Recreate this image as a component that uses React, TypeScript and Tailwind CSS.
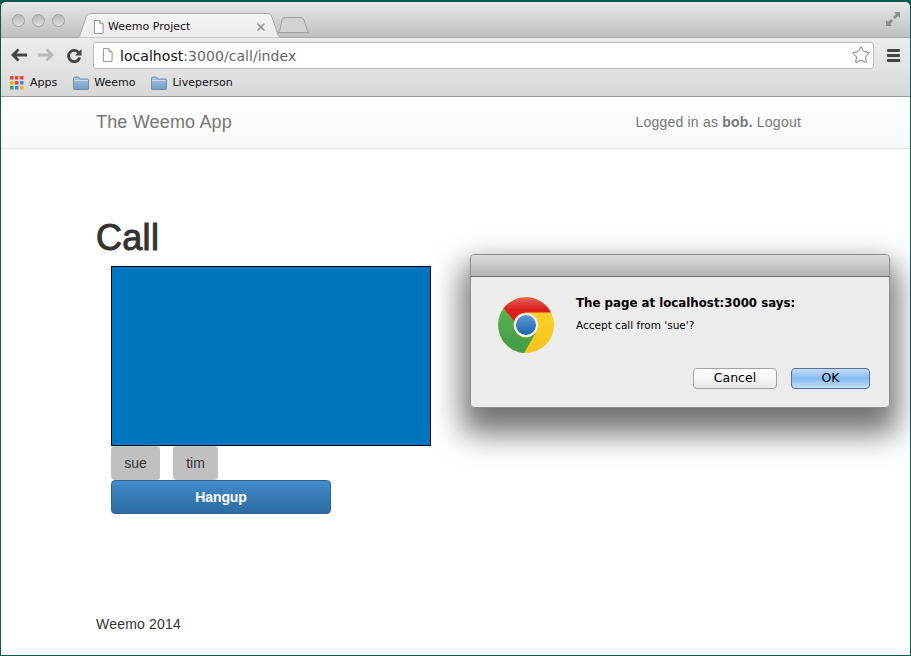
import React from 'react';
import { Star, X } from 'lucide-react';

const PageIcon = ({ className }: { className?: string }) => (
  <svg viewBox="0 0 12 15" className={className} fill="#fff" stroke="#8a8a8a" strokeWidth="1">
    <path d="M1.5.5h6l3.5 3.5v10.5h-9.500z" />
    <path d="M7.500.5v3.500h3.500" fill="#ddd" />
  </svg>
);

const Folder = () => (
  <svg viewBox="0 0 16 14" className="w-4 h-[14px] mr-[5px]">
    <defs>
      <linearGradient id="folder" x1="0" y1="0" x2="0" y2="1">
        <stop offset="0" stopColor="#a9c8e2" />
        <stop offset="1" stopColor="#6f9dc4" />
      </linearGradient>
    </defs>
    <path d="M.5 2.500q0-1.500 1.500-1.500h3.500l1.500 2h7.500q1 0 1 1v8.500q0 1-1 1h-13q-1 0-1-1z" fill="url(#folder)" stroke="#5f7f9b" strokeWidth=".8" />
    <path d="M1 4.500h14" stroke="#d5e4f0" strokeWidth=".8" />
  </svg>
);

const AppsGrid = () => (
  <svg viewBox="0 0 14 14" className="w-[14px] h-[14px] mr-[6px]">
    {[
      ['#e8453c', '#e8453c', '#e8453c'],
      ['#f4b400', '#e8453c', '#4285f4'],
      ['#34a853', '#4285f4', '#f4b400'],
    ].map((row, y) =>
      row.map((c, x) => <rect key={`${x}-${y}`} x={x * 5} y={y * 5} width="3.500" height="3.500" fill={c} />)
    )}
  </svg>
);

const ChromeLogo = () => (
  <svg viewBox="0 0 56 56" className="w-14 h-14 shrink-0">
    <defs>
      <linearGradient id="red" x1="0" y1="0" x2="0" y2="1">
        <stop offset="0" stopColor="#e8625a" />
        <stop offset="0.5" stopColor="#d9201f" />
      </linearGradient>
      <linearGradient id="yellow" x1="0" y1="0" x2="0" y2="1">
        <stop offset="0" stopColor="#fcd42c" />
        <stop offset="1" stopColor="#f7c31f" />
      </linearGradient>
      <linearGradient id="green" x1="0" y1="0" x2="0" y2="1">
        <stop offset="0" stopColor="#58b44f" />
        <stop offset="1" stopColor="#3f9b48" />
      </linearGradient>
      <linearGradient id="iris" x1="0" y1="0" x2="0" y2="1">
        <stop offset="0" stopColor="#5b97d6" />
        <stop offset="1" stopColor="#2266ac" />
      </linearGradient>
    </defs>
    <circle cx="28" cy="28" r="28" fill="url(#yellow)" />
    <path d="M5.500 11.500A28 28 0 0 1 53 15.500L28 15.500A12.500 12.500 0 0 0 16 24.500z" fill="url(#red)" />
    <path d="M5.500 11.500A28 28 0 0 0 26 55.900L38 35.500A12.500 12.500 0 0 1 16 24.500z" fill="url(#green)" />
    <circle cx="28" cy="28" r="12" fill="#f0f4f6" />
    <circle cx="28" cy="28" r="10" fill="url(#iris)" />
  </svg>
);

const Light = () => (
  <span className="w-[13px] h-[13px] rounded-full border border-[#a2a2a2] bg-gradient-to-b from-[#b8b8b8] to-[#dcdcdc]" />
);

export default function App() {
  return (
    <div className="relative w-[911px] h-[656px] overflow-hidden bg-[#0d5c4a] font-['Liberation_Sans',sans-serif] text-[#333]">
      <div className="mt-[2px] mx-px h-[653px] w-[909px] bg-white rounded-t-[5px] overflow-hidden flex flex-col">
        {/* title bar with tabs */}
        <div className="h-[36px] shrink-0 flex items-end bg-gradient-to-b from-[#e8e8e8] to-[#bfbfbf] border-b border-[#a9a9a9] font-['DejaVu_Sans',sans-serif]">
          <div className="flex gap-[7px] pl-[11px] self-start mt-[12px]">
            <Light />
            <Light />
            <Light />
          </div>
          <div className="ml-[11px] relative -mb-px w-[207px] h-[25px] flex items-center pt-[3px] pl-[17px] pr-[16px]">
            <svg viewBox="0 0 207 25" className="absolute inset-0 w-full h-full">
              <defs>
                <linearGradient id="tab" x1="0" y1="0" x2="0" y2="1">
                  <stop offset="0" stopColor="#f4f4f4" />
                  <stop offset="1" stopColor="#ececec" />
                </linearGradient>
              </defs>
              <path d="M0 25q3 0 4-3L10 4q1-3.500 4-3.500h178q3 0 4 3.500l6 18q1 3 5 3z" fill="url(#tab)" stroke="#a8a8a8" />
            </svg>
            <PageIcon className="relative w-[11px] h-[14px] mr-[4px] shrink-0" />
            <span className="relative text-[11px] text-[#111] whitespace-nowrap">Weemo Project</span>
            <X className="relative ml-auto w-3 h-3 text-[#888]" strokeWidth={3} />
          </div>
          <svg viewBox="0 0 34 16" className="-ml-[8px] mb-[4px] w-[34px] h-[16px]">
            <path d="M1 15.500q3 0 4-3L7 3q.5-2.500 3-2.500h16q2 0 3 2.500l3 9.500q1 3 2 3z" fill="#d2d2d2" stroke="#a0a0a0" />
          </svg>
          <svg viewBox="0 0 16 16" className="ml-auto mr-[9px] mb-[10px] w-4 h-4 text-[#8c8c8c]" fill="currentColor">
            <path d="M9 1h6v6l-2-2-3 3-2-2 3-3z" />
            <path d="M7 15H1V9l2 2 3-3 2 2-3 3z" />
          </svg>
        </div>

        {/* toolbar */}
        <div className="h-[32px] shrink-0 flex items-center pt-[2px] bg-gradient-to-b from-[#ececec] to-[#e2e2e2] font-['DejaVu_Sans',sans-serif]">
          <div className="w-[92px] shrink-0 flex items-center pl-[10px] gap-[11px]">
            <svg viewBox="0 0 16 14" className="w-4 h-[14px]" fill="none" stroke="#444" strokeWidth="2.800">
              <path d="M7.500 1.500 2 7l5.500 5.500M2.500 7H16" />
            </svg>
            <svg viewBox="0 0 16 14" className="w-4 h-[14px]" fill="none" stroke="#b9b9b9" strokeWidth="2.800">
              <path d="M8.500 1.500 14 7l-5.500 5.500M13.500 7H0" />
            </svg>
            <svg viewBox="0 0 16 16" className="ml-[2px] w-[15px] h-[15px]" fill="none">
              <path d="M12.500 5A6 6 0 1 0 13.500 10" stroke="#444" strokeWidth="3" />
              <path d="M15.500 1v7h-7z" fill="#444" />
            </svg>
          </div>
          <div className="w-[781px] h-[27px] flex items-center bg-white border border-[#b9b9b9] rounded-[3px] pl-[8px] pr-[2px]">
            <PageIcon className="w-[11px] h-[14px] mr-[7px] shrink-0" />
            <span className="relative top-px text-[14px] tracking-[0.05px] text-[#111]">
              localhost<span className="text-[#666]">:3000/call/index</span>
            </span>
            <Star className="ml-auto w-5 h-5 text-[#777]" strokeWidth={1.2} />
          </div>
          <div className="ml-[13px] flex flex-col gap-[2px]">
            <span className="block w-[13px] h-[3px] bg-[#444] rounded-[1px]" />
            <span className="block w-[13px] h-[3px] bg-[#444] rounded-[1px]" />
            <span className="block w-[13px] h-[3px] bg-[#444] rounded-[1px]" />
          </div>
        </div>

        {/* bookmarks */}
        <div className="h-[27px] shrink-0 flex items-center pl-[9px] bg-gradient-to-b from-[#e2e2e2] to-[#d8d8d8] border-b border-[#9a9a9a] text-[11px] text-[#111] font-['DejaVu_Sans',sans-serif]">
          <AppsGrid />
          <span>Apps</span>
          <span className="ml-[16px] flex items-center">
            <Folder />
            Weemo
          </span>
          <span className="ml-[16px] flex items-center">
            <Folder />
            Liveperson
          </span>
        </div>

        {/* page navbar */}
        <div className="h-[52px] shrink-0 flex items-center pl-[95px] pr-[109px] bg-gradient-to-b from-white to-[#f8f8f8] border-b border-[#e7e7e7] text-[#777]">
          <span className="text-[18px] tracking-[0.17px]">The Weemo App</span>
          <span className="ml-auto text-[14px] tracking-[0.22px]">
            Logged in as <b>bob.</b> Logout
          </span>
        </div>

        {/* page body */}
        <div className="flex-1 pl-[95px] flex flex-col">
          <h1 className="mt-[66px] h-[46px] text-[36px] leading-[46px] tracking-[0.3px] [-webkit-text-stroke:1px_#333] text-[#333]">Call</h1>
          <div className="ml-[15px] mt-[5px]">
            <div className="w-[320px] h-[180px] bg-[#0075bf] border border-black" />
            <div className="flex gap-[13px]">
              <button className="w-[49px] h-[34px] rounded-[4px] bg-[#c0c0c0] text-[14px] text-[#333]">sue</button>
              <button className="w-[45px] h-[34px] rounded-[4px] bg-[#c0c0c0] text-[14px] text-[#333]">tim</button>
            </div>
            <button className="w-[220px] h-[34px] rounded-[4px] border border-[#2b669a] bg-gradient-to-b from-[#428bca] to-[#2d6ca2] text-[14px] tracking-[-0.1px] font-bold text-white">
              Hangup
            </button>
          </div>
          <p className="mt-auto mb-[20px] text-[14px] tracking-[0.2px] text-[#333]">Weemo 2014</p>
        </div>
      </div>

      {/* javascript confirm dialog */}
      <div className="absolute left-[470px] top-[254px] w-[420px] h-[154px] rounded-[4px] bg-[#ececec] border border-[#8f8f8f] font-['DejaVu_Sans',sans-serif] shadow-[0_18px_30px_8px_rgba(0,0,0,0.55)] flex flex-col">
        <div className="h-[22px] shrink-0 rounded-t-[4px] bg-gradient-to-b from-[#dcdcdc] to-[#b4b4b4] border-b border-[#6f6f6f]" />
        <div className="flex pl-[27px] pt-[20px]">
          <ChromeLogo />
          <div className="ml-[22px] -mt-px text-black">
            <p className="text-[11.800px] font-bold leading-[15px]">The page at localhost:3000 says:</p>
            <p className="mt-[7px] text-[10.500px] leading-[14px]">Accept call from 'sue'?</p>
          </div>
        </div>
        <div className="absolute right-[19px] bottom-[18px] flex gap-[14px] text-[12.500px] text-black">
          <button className="w-[84px] h-[21px] rounded-[4px] border border-[#a2a2a2] bg-gradient-to-b from-white to-[#e9e9e9]">Cancel</button>
          <button className="w-[79px] h-[21px] rounded-[4px] border border-[#5a6f9e] bg-gradient-to-b from-[#c6dcf6] via-[#86bcf2] to-[#c0e0fb]">OK</button>
        </div>
      </div>
    </div>
  );
}
